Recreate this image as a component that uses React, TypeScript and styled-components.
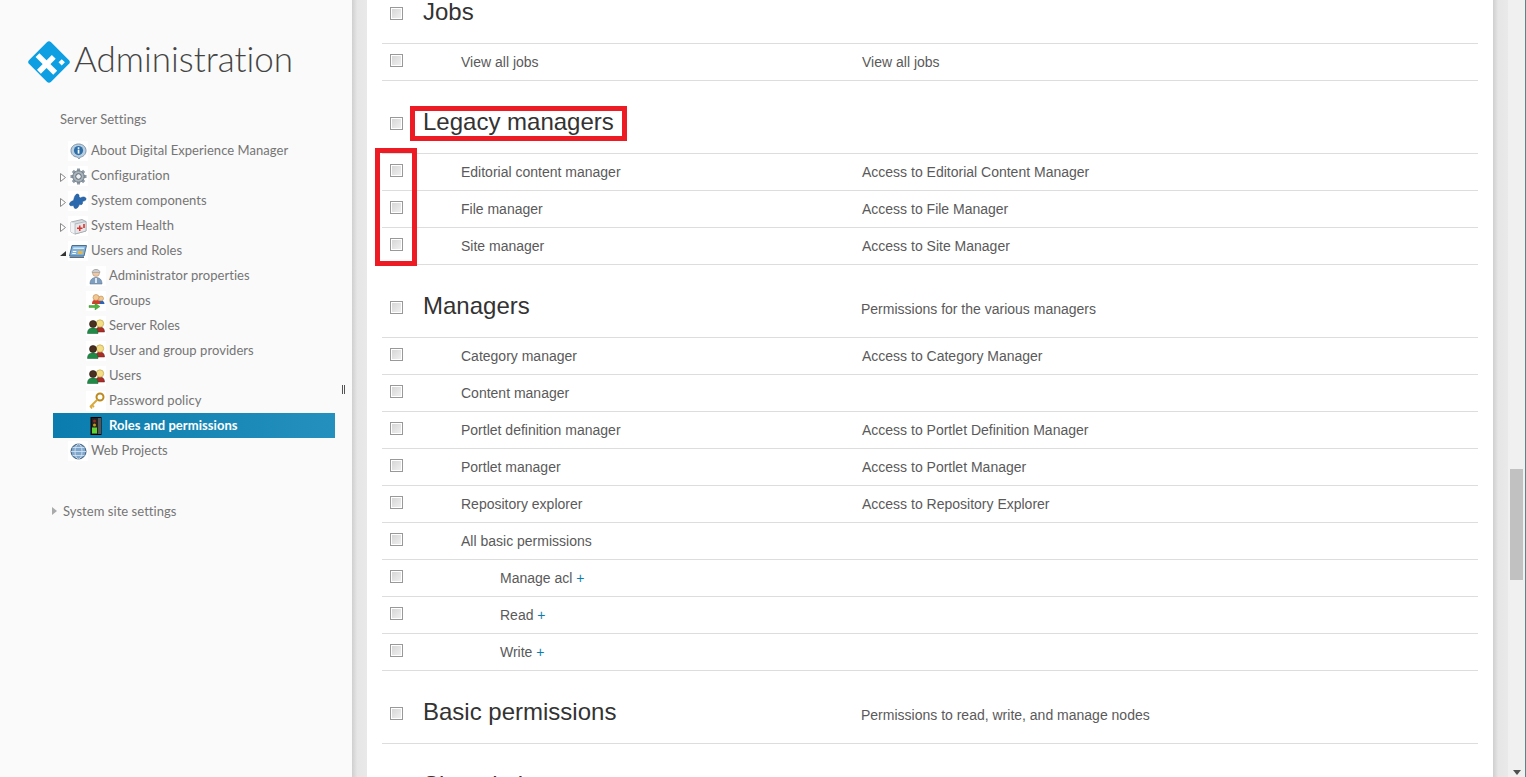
import React from 'react';
import styled, { createGlobalStyle } from 'styled-components';

const GlobalStyle = createGlobalStyle`
  html, body {
    margin: 0;
    height: 100%;
    overflow: hidden;
    background: #fff;
  }
`;

const Page = styled.div`
  display: flex;
  width: 1526px;
  height: 777px;
  overflow: hidden;
`;

const Sidebar = styled.aside`
  position: relative;
  flex: 0 0 352px;
  box-sizing: border-box;
  padding: 41px 17px 0 53px;
  background: #fafafa;
  font-family: Lato, 'Open Sans', sans-serif;
  font-variant-ligatures: none;
  color: #757575;
  font-size: 13px;
  letter-spacing: 0.05px;
`;

const Brand = styled.div`
  display: flex;
  align-items: center;
  gap: 3px;
  height: 42px;
  margin-left: -26px;
  font-size: 35px;
  font-weight: 300;
  letter-spacing: 0;
  color: #444;
`;

const BrandName = styled.span`
  padding-bottom: 8px;
`;

const SectionTitle = styled.div`
  height: 20px;
  line-height: 20px;
  margin: 26px 0 9px 7px;
`;

const Tree = styled.ul`
  list-style: none;
  margin: 0;
  padding: 0;
`;

const TreeRow = styled.li<{ $level: number; $selected?: boolean }>`
  display: flex;
  align-items: center;
  box-sizing: border-box;
  height: 25px;
  padding-bottom: 2px;
  padding-left: ${(p) => (p.$level === 2 ? 33 : 7)}px;
  background: ${(p) => (p.$selected ? 'linear-gradient(90deg, #0a7dae, #2490bd)' : 'transparent')};
  color: ${(p) => (p.$selected ? '#fff' : 'inherit')};
  font-weight: ${(p) => (p.$selected ? 700 : 400)};
`;

const Arrow = styled.span`
  flex: 0 0 8px;
  display: flex;
  align-items: center;
  margin-top: 5px;
`;

const IconTile = styled.span<{ $selected?: boolean }>`
  flex: 0 0 20px;
  height: 20px;
  display: flex;
  align-items: center;
  justify-content: center;
  margin-top: 3px;
  margin-right: 3px;
  background: ${(p) => (p.$selected ? 'transparent' : '#fff')};
`;

const SiteSettings = styled.div`
  display: flex;
  align-items: center;
  gap: 6px;
  height: 20px;
  margin-top: 38px;
  margin-left: -1px;
`;

const Handle = styled.div`
  position: absolute;
  left: 342px;
  top: 385px;
  width: 3px;
  height: 9px;
  border-left: 1px solid #555;
  border-right: 1px solid #555;
  box-sizing: border-box;
`;

const Gutter = styled.div`
  flex: 0 0 15px;
  background: linear-gradient(90deg, #cfcfcf, #e6e6e6 35%, #e9e9e9);
`;

const Main = styled.main`
  flex: 0 0 1126px;
  box-sizing: border-box;
  padding: 0 15px;
  background: #fff;
  font-family: 'Liberation Sans', Arial, sans-serif;
  font-size: 14px;
  color: #5a5a5a;
  overflow: hidden;
`;

const Sheet = styled.div`
  margin-top: -29px;
`;

const GroupRow = styled.div`
  display: grid;
  grid-template-columns: 41px 438px 1fr;
  align-items: center;
  box-sizing: border-box;
  height: 73px;
  padding-top: 11px;
  border-bottom: 1px solid #ddd;
`;

const Heading = styled.h2<{ $marked?: boolean }>`
  margin: 0 0 2px;
  font-size: 24px;
  font-weight: 400;
  line-height: 27px;
  color: #333;
  width: max-content;
  ${(p) => p.$marked && `
    outline: 5px solid #ed1c24;
    margin: 2px 0 0 -8px;
    padding: 1px 8px 4px;
    line-height: 20px;
  `}
`;

const GroupDesc = styled.div`
  padding-top: 4px;
`;

const Row = styled.div`
  display: grid;
  grid-template-columns: 79px 401px 1fr;
  align-items: center;
  box-sizing: border-box;
  height: 37px;
  border-bottom: 1px solid #ddd;
`;

const RowName = styled.div<{ $sub?: boolean }>`
  padding-left: ${(p) => (p.$sub ? 39 : 0)}px;
`;

const Plus = styled.span`
  color: #0a7dae;
`;

const Check = styled.input.attrs({ type: 'checkbox' })`
  appearance: none;
  display: block;
  box-sizing: border-box;
  width: 13px;
  height: 13px;
  margin: 0 0 3px 8px;
  border: 1px solid #999;
  box-shadow: inset 0 0 0 1px #fff;
  background: linear-gradient(135deg, #d4d4d4, #f2f2f2);
`;

const GroupCheck = styled(Check)`
  margin: 1px 0 0 8px;
`;

const Marked = styled.div`
  position: relative;
`;

const MarkBox = styled.div`
  position: absolute;
  left: -7px;
  top: -6px;
  width: 42px;
  height: 118px;
  box-sizing: border-box;
  border: 5px solid #ed1c24;
  pointer-events: none;
`;

const ScrollTrack = styled.div`
  position: relative;
  flex: 0 0 18px;
  background: #f0f0f0;
  border-right: 1px solid #5f8488;
  box-sizing: border-box;
`;

const ScrollThumb = styled.div`
  position: absolute;
  left: 2px;
  top: 469px;
  width: 13px;
  height: 111px;
  background: #c1c1c1;
`;

const ScrollArrow = styled.div`
  position: absolute;
  left: 5px;
  bottom: 2px;
  width: 0;
  height: 0;
  border-left: 4px solid transparent;
  border-right: 4px solid transparent;
  border-top: 5px solid #505050;
`;

const Logo = () => (
  <svg width="44" height="44" viewBox="0 0 44 44">
    <rect x="6.500" y="6.500" width="31" height="31" rx="3" fill="#0e9fe2" transform="rotate(45 22 22)" />
    <g fill="#fff" transform="rotate(45 22 22)">
      <rect x="9" y="22.500" width="25" height="5.500" />
      <rect x="19" y="15" width="5.500" height="21" />
      <rect x="29" y="11" width="4.500" height="4.500" />
    </g>
  </svg>
);

const OpenArrow = () => (
  <svg width="6" height="9" viewBox="0 0 6 9">
    <path d="M.5.5 5.500 4.500.5 8.500Z" fill="#fff" stroke="#888" />
  </svg>
);

const DownArrow = () => (
  <svg width="6" height="9" viewBox="0 0 6 9">
    <path d="M6 3V8H0Z" fill="#333" />
  </svg>
);

const ClosedArrow = () => (
  <svg width="5" height="8" viewBox="0 0 5 8">
    <path d="M0 0 5 4 0 8Z" fill="#aaa" />
  </svg>
);

const Info = () => (
  <svg width="17" height="17" viewBox="0 0 17 17">
    <path d="M8.500 1C12.600 1 16 3.600 16 7.600S12.800 14 10.400 14L9 16 7.400 14C4 14 1 11.600 1 7.600S4.400 1 8.500 1Z" fill="#b9cfe0" stroke="#7f97ad" />
    <circle cx="8.500" cy="7.600" r="4.600" fill="#2f6fa8" />
    <rect x="7.700" y="4.300" width="1.700" height="1.600" fill="#fff" />
    <rect x="7.700" y="6.600" width="1.700" height="4" fill="#fff" />
  </svg>
);

const Gear = () => (
  <svg width="17" height="17" viewBox="0 0 17 17">
    <g fill="#8d99a3">
      {[0, 45, 90, 135].map((a) => (
        <rect key={a} x="7" y="0.500" width="3" height="16" transform={`rotate(${a} 8.500 8.500)`} />
      ))}
    </g>
    <circle cx="8.500" cy="8.500" r="5.700" fill="#a9b4bc" stroke="#6d7a84" />
    <circle cx="8.500" cy="8.500" r="2.800" fill="#eef1f3" stroke="#596670" />
  </svg>
);

const Puzzle = () => (
  <svg width="18" height="17" viewBox="0 0 18 17">
    <path d="M7 1.500C9 .3 10.500 1.500 10 3.500L11.500 5C13 3.500 16.500 3.500 17 5.500 17.500 7.500 15 8 13.500 8.500L13.500 10.500C13 12.500 11 11 10 12 9.500 14 8 16 6 15.500 4.500 15 5.500 13 4 12.500 2.500 13 .5 13 .5 11 .5 9 3 8 4.500 7.500 5 5.500 5.500 3 7 1.500Z" fill="#2a69ad" stroke="#1d4f87" strokeWidth=".5" />
  </svg>
);

const Medkit = () => (
  <svg width="17" height="17" viewBox="0 0 17 17">
    <path d="M1 4 12 1.500 16 3.500V13L5 16 1 14Z" fill="#d6dbe0" stroke="#8b939b" strokeWidth=".7" />
    <path d="M1 4 5 6V16L1 14Z" fill="#f1f3f5" />
    <path d="M5 6 16 3.500V13L5 16Z" fill="#e3e6ea" stroke="#8b939b" strokeWidth=".5" />
    <path d="M7 9.500H9V7.500H10.500V9.500H12.500V11H10.500V13H9V11H7Z" fill="#e0322b" />
    <rect x="13.200" y="6" width="1.600" height="4" fill="#e0322b" />
  </svg>
);

const Card = () => (
  <svg width="18" height="16" viewBox="0 0 18 16">
    <path d="M3 2.500H17.500L15 13H.5Z" fill="#7fb2dc" stroke="#4c6f8e" />
    <path d="M4.500 4.500H15.500L15 6H4Z" fill="#d7e8f5" />
    <path d="M9 8H14L13.500 11H8.500Z" fill="#e7b64b" />
    <rect x="3.800" y="8" width="3.500" height="1" fill="#fff" />
    <rect x="3.300" y="10" width="3.500" height="1" fill="#fff" />
    <path d="M1 13.500H15V15H.5Z" fill="#54708a" />
  </svg>
);

const Admin = () => (
  <svg width="16" height="18" viewBox="0 0 16 18">
    <path d="M2 17C2 12.500 4.500 10.500 8 10.500S14 12.500 14 17Z" fill="#7f9fc2" stroke="#5e7791" strokeWidth=".6" />
    <rect x="7" y="11" width="2" height="5" fill="#dfe6ec" />
    <circle cx="8" cy="6" r="3.500" fill="#efc9a4" stroke="#a48566" strokeWidth=".5" />
    <path d="M4 5.500C4 1.500 12 1.500 12 5.500Z" fill="#c9ced3" stroke="#8a8f94" strokeWidth=".5" />
  </svg>
);

const Groups = () => (
  <svg width="17" height="17" viewBox="0 0 17 17">
    <path d="M10 11C10 8.500 11.500 7.500 13 7.500S16.500 8.500 16.500 11Z" fill="#2a63b8" />
    <circle cx="13" cy="5.500" r="2.500" fill="#f0c68f" stroke="#b0763d" strokeWidth=".5" />
    <path d="M4 11C4 7.500 6 6.500 8 6.500S12 7.500 12 11Z" fill="#d63c2c" />
    <circle cx="8" cy="4.500" r="3" fill="#f2c892" stroke="#b0763d" strokeWidth=".5" />
    <path d="M1 12.500H7V10L12 13.500 7 17V14.500H1Z" fill="#4fb43c" stroke="#2a8121" strokeWidth=".4" />
  </svg>
);

const Pair = () => (
  <svg width="18" height="16" viewBox="0 0 18 16">
    <path d="M8.500 14C8.500 10.500 10.500 9 13 9S17.500 10.500 17.500 14Z" fill="#a92e28" stroke="#6d1b18" strokeWidth=".5" />
    <circle cx="13" cy="5.500" r="3.700" fill="#f3dd86" stroke="#b59b3a" strokeWidth=".6" />
    <path d="M.5 15.500C.5 11 3 10 6 10S11 11 11 15.500Z" fill="#1f8a45" stroke="#125c2c" strokeWidth=".5" />
    <circle cx="6" cy="6" r="3.500" fill="#4a3020" stroke="#23150c" strokeWidth=".6" />
  </svg>
);

const Key = () => (
  <svg width="17" height="18" viewBox="0 0 17 18">
    <circle cx="12" cy="5" r="3.500" fill="none" stroke="#bd8a1e" strokeWidth="2" />
    <path d="M9.500 7.500 2 15M4 13 6 15M2.500 14.500 4 16.500" fill="none" stroke="#d9a93a" strokeWidth="1.800" />
  </svg>
);

const Traffic = () => (
  <svg width="12" height="18" viewBox="0 0 12 18">
    <rect x="1" y=".5" width="10" height="17" fill="#222" stroke="#000" />
    <rect x="8" y="1" width="3" height="16" fill="#555" />
    <circle cx="4.500" cy="4" r="1.500" fill="#8f2a1c" />
    <circle cx="4.500" cy="8" r="1.500" fill="#c79a1b" />
    <path d="M2 10.500H7V16.500H2Z" fill="#5fd32f" />
  </svg>
);

const Globe = () => (
  <svg width="17" height="17" viewBox="0 0 17 17">
    <circle cx="8.500" cy="8.500" r="7.500" fill="#7fa6cc" stroke="#3e5b78" />
    <path d="M1 8.500H16M2.500 4.500H14.500M2.500 12.500H14.500" stroke="#dbe7f2" strokeWidth=".8" />
    <ellipse cx="8.500" cy="8.500" rx="3.500" ry="7.500" fill="none" stroke="#dbe7f2" strokeWidth=".8" />
  </svg>
);

type NavItem = {
  label: string;
  level: number;
  icon: React.ReactNode;
  arrow?: 'open' | 'down';
  selected?: boolean;
};

const navItems: NavItem[] = [
  { label: 'About Digital Experience Manager', level: 1, icon: <Info /> },
  { label: 'Configuration', level: 1, icon: <Gear />, arrow: 'open' },
  { label: 'System components', level: 1, icon: <Puzzle />, arrow: 'open' },
  { label: 'System Health', level: 1, icon: <Medkit />, arrow: 'open' },
  { label: 'Users and Roles', level: 1, icon: <Card />, arrow: 'down' },
  { label: 'Administrator properties', level: 2, icon: <Admin /> },
  { label: 'Groups', level: 2, icon: <Groups /> },
  { label: 'Server Roles', level: 2, icon: <Pair /> },
  { label: 'User and group providers', level: 2, icon: <Pair /> },
  { label: 'Users', level: 2, icon: <Pair /> },
  { label: 'Password policy', level: 2, icon: <Key /> },
  { label: 'Roles and permissions', level: 2, icon: <Traffic />, selected: true },
  { label: 'Web Projects', level: 1, icon: <Globe /> },
];

type PermRow = { name: string; desc?: string; sub?: boolean };

const PermRows = ({ rows }: { rows: PermRow[] }) => (
  <>
    {rows.map((r) => (
      <Row key={r.name}>
        <Check readOnly />
        <RowName $sub={r.sub}>
          {r.name}
          {r.sub && <Plus> +</Plus>}
        </RowName>
        <div>{r.desc}</div>
      </Row>
    ))}
  </>
);

const Group = ({ title, desc, marked }: { title: string; desc?: string; marked?: boolean }) => (
  <GroupRow>
    <GroupCheck readOnly />
    <Heading $marked={marked}>{title}</Heading>
    <GroupDesc>{desc}</GroupDesc>
  </GroupRow>
);

export default function App() {
  return (
    <Page>
      <GlobalStyle />
      <Sidebar>
        <Brand>
          <Logo />
          <BrandName>Administration</BrandName>
        </Brand>
        <SectionTitle>Server Settings</SectionTitle>
        <Tree>
          {navItems.map((item) => (
            <TreeRow key={item.label} $level={item.level} $selected={item.selected}>
              {item.level === 1 && (
                <Arrow>
                  {item.arrow === 'open' && <OpenArrow />}
                  {item.arrow === 'down' && <DownArrow />}
                </Arrow>
              )}
              <IconTile $selected={item.selected}>{item.icon}</IconTile>
              {item.label}
            </TreeRow>
          ))}
        </Tree>
        <SiteSettings>
          <ClosedArrow />
          System site settings
        </SiteSettings>
        <Handle />
      </Sidebar>
      <Gutter />
      <Main>
        <Sheet>
          <Group title="Jobs" />
          <PermRows rows={[{ name: 'View all jobs', desc: 'View all jobs' }]} />
          <Group title="Legacy managers" marked />
          <Marked>
            <MarkBox />
            <PermRows
              rows={[
                { name: 'Editorial content manager', desc: 'Access to Editorial Content Manager' },
                { name: 'File manager', desc: 'Access to File Manager' },
                { name: 'Site manager', desc: 'Access to Site Manager' },
              ]}
            />
          </Marked>
          <Group title="Managers" desc="Permissions for the various managers" />
          <PermRows
            rows={[
              { name: 'Category manager', desc: 'Access to Category Manager' },
              { name: 'Content manager' },
              { name: 'Portlet definition manager', desc: 'Access to Portlet Definition Manager' },
              { name: 'Portlet manager', desc: 'Access to Portlet Manager' },
              { name: 'Repository explorer', desc: 'Access to Repository Explorer' },
              { name: 'All basic permissions' },
              { name: 'Manage acl', sub: true },
              { name: 'Read', sub: true },
              { name: 'Write', sub: true },
            ]}
          />
          <Group title="Basic permissions" desc="Permissions to read, write, and manage nodes" />
          <Group title="Site admin" />
        </Sheet>
      </Main>
      <Gutter />
      <ScrollTrack>
        <ScrollThumb />
        <ScrollArrow />
      </ScrollTrack>
    </Page>
  );
}
